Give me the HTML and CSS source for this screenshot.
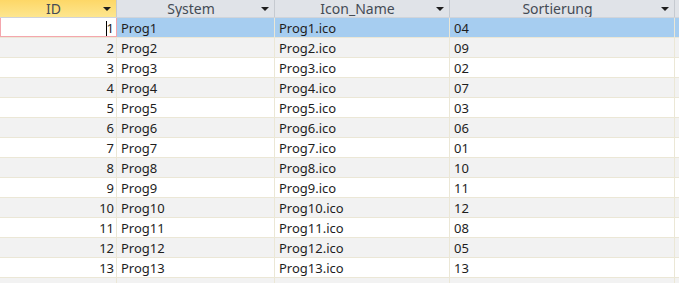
FILE: index.html
```html
<!DOCTYPE html>
<html lang="de">
<head>
  <meta charset="UTF-8" />
  <title>Programme</title>
  <link rel="stylesheet" href="styles.css">
</head>
<body>
  <!-- Datasheet view -->
  <div class="sheet">
    <div class="row head">
      <div class="cell c-id hd active"><span>ID</span><i class="arrow"></i></div>
      <div class="cell c-sys hd"><span>System</span><i class="arrow"></i></div>
      <div class="cell c-icon hd"><span>Icon_Name</span><i class="arrow"></i></div>
      <div class="cell c-sort hd"><span>Sortierung</span><i class="arrow"></i></div>
      <div class="cell c-more hd"><i class="mark"></i></div>
    </div>

    <div class="row sel">
      <div class="cell c-id num focus"><span class="caret"></span>1</div>
      <div class="cell c-sys">Prog1</div>
      <div class="cell c-icon">Prog1.ico</div>
      <div class="cell c-sort">04</div>
      <div class="cell c-more"></div>
    </div>
    <div class="row alt">
      <div class="cell c-id num">2</div>
      <div class="cell c-sys">Prog2</div>
      <div class="cell c-icon">Prog2.ico</div>
      <div class="cell c-sort">09</div>
      <div class="cell c-more"></div>
    </div>
    <div class="row">
      <div class="cell c-id num">3</div>
      <div class="cell c-sys">Prog3</div>
      <div class="cell c-icon">Prog3.ico</div>
      <div class="cell c-sort">02</div>
      <div class="cell c-more"></div>
    </div>
    <div class="row alt">
      <div class="cell c-id num">4</div>
      <div class="cell c-sys">Prog4</div>
      <div class="cell c-icon">Prog4.ico</div>
      <div class="cell c-sort">07</div>
      <div class="cell c-more"></div>
    </div>
    <div class="row">
      <div class="cell c-id num">5</div>
      <div class="cell c-sys">Prog5</div>
      <div class="cell c-icon">Prog5.ico</div>
      <div class="cell c-sort">03</div>
      <div class="cell c-more"></div>
    </div>
    <div class="row alt">
      <div class="cell c-id num">6</div>
      <div class="cell c-sys">Prog6</div>
      <div class="cell c-icon">Prog6.ico</div>
      <div class="cell c-sort">06</div>
      <div class="cell c-more"></div>
    </div>
    <div class="row">
      <div class="cell c-id num">7</div>
      <div class="cell c-sys">Prog7</div>
      <div class="cell c-icon">Prog7.ico</div>
      <div class="cell c-sort">01</div>
      <div class="cell c-more"></div>
    </div>
    <div class="row alt">
      <div class="cell c-id num">8</div>
      <div class="cell c-sys">Prog8</div>
      <div class="cell c-icon">Prog8.ico</div>
      <div class="cell c-sort">10</div>
      <div class="cell c-more"></div>
    </div>
    <div class="row">
      <div class="cell c-id num">9</div>
      <div class="cell c-sys">Prog9</div>
      <div class="cell c-icon">Prog9.ico</div>
      <div class="cell c-sort">11</div>
      <div class="cell c-more"></div>
    </div>
    <div class="row alt">
      <div class="cell c-id num">10</div>
      <div class="cell c-sys">Prog10</div>
      <div class="cell c-icon">Prog10.ico</div>
      <div class="cell c-sort">12</div>
      <div class="cell c-more"></div>
    </div>
    <div class="row">
      <div class="cell c-id num">11</div>
      <div class="cell c-sys">Prog11</div>
      <div class="cell c-icon">Prog11.ico</div>
      <div class="cell c-sort">08</div>
      <div class="cell c-more"></div>
    </div>
    <div class="row alt">
      <div class="cell c-id num">12</div>
      <div class="cell c-sys">Prog12</div>
      <div class="cell c-icon">Prog12.ico</div>
      <div class="cell c-sort">05</div>
      <div class="cell c-more"></div>
    </div>
    <div class="row">
      <div class="cell c-id num">13</div>
      <div class="cell c-sys">Prog13</div>
      <div class="cell c-icon">Prog13.ico</div>
      <div class="cell c-sort">13</div>
      <div class="cell c-more"></div>
    </div>
    <div class="row alt">
      <div class="cell c-id num"></div>
      <div class="cell c-sys"></div>
      <div class="cell c-icon"></div>
      <div class="cell c-sort"></div>
      <div class="cell c-more"></div>
    </div>
  </div>
</body>
</html>
```

FILE: styles.css
```css
/* ---- Global ---- */
html, body {
  margin: 0;
  padding: 0;
  overflow: hidden;
  background: #ffffff;
  font-family: "Noto Sans", "Open Sans", sans-serif;
  font-size: 13px;
  color: #1e1e1e;
}

/* ---- Datasheet ---- */
.sheet {
  width: 679px;
}

.row {
  display: flex;
  height: 20px;
  box-sizing: border-box;
  border-bottom: 1px solid #ebe7d6;
}
.row.alt { background: #f2f2f2; }
.row.sel { background: #a6cdf0; }

.cell {
  box-sizing: border-box;
  flex: none;
  height: 100%;
  border-right: 1px solid #ebe7d6;
  padding: 0 4px;
  line-height: 21px;
  white-space: nowrap;
  overflow: hidden;
}
.c-id   { width: 117px; }
.c-sys  { width: 158px; }
.c-icon { width: 175px; }
.c-sort { width: 225px; }
.c-more { flex: 1; border-right: none; }

.num {
  text-align: right;
  padding-right: 2px;
}

/* current cell with focus */
.focus {
  background: #ffffff;
  border: 1px solid #f4a6ad;
  border-top: none;
  line-height: 20px;
}
.caret {
  display: inline-block;
  width: 1px;
  height: 15px;
  background: #000;
  vertical-align: -3px;
}

/* ---- Header ---- */
.row.head {
  height: 18px;
  background: #e0e3e8;
  border-bottom: 1px solid #d0d4da;
}
.hd {
  display: flex;
  align-items: center;
  color: #444b55;
  font-size: 14px;
  border-right: 1px solid #c6cad0;
  padding: 0 5px 0 4px;
  line-height: 17px;
}
.hd span {
  flex: 1;
  text-align: center;
}
.hd.active {
  background: linear-gradient(#fdd767, #fde68f);
}
.arrow {
  width: 0;
  height: 0;
  border-left: 4px solid transparent;
  border-right: 4px solid transparent;
  border-top: 4px solid #1e1e1e;
  margin-top: 1px;
}
.mark {
  width: 2px;
  height: 3px;
  background: #c98a3a;
  margin-left: 1px;
  margin-top: 4px;
}
```
